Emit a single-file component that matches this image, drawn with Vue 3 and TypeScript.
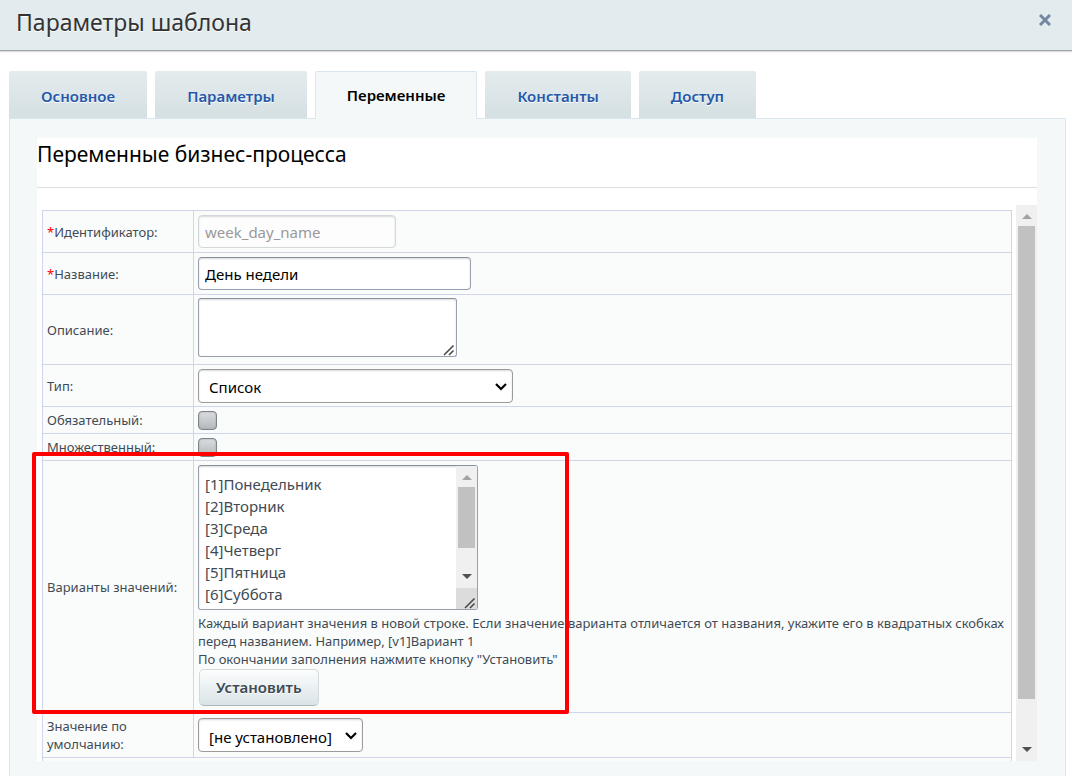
<script setup lang="ts">
import { ref } from 'vue'

interface Tab {
  id: string
  label: string
}

const tabs: Tab[] = [
  { id: 'main', label: 'Основное' },
  { id: 'params', label: 'Параметры' },
  { id: 'vars', label: 'Переменные' },
  { id: 'consts', label: 'Константы' },
  { id: 'access', label: 'Доступ' },
]

const activeTab = ref('vars')
const identifier = ref('week_day_name')
const title = ref('День недели')
const description = ref('')
const required = ref(false)
const multiple = ref(false)
const options = ref(
  [
    '[1]Понедельник',
    '[2]Вторник',
    '[3]Среда',
    '[4]Четверг',
    '[5]Пятница',
    '[6]Суббота',
    '[7]Воскресенье',
  ].join('\n'),
)
</script>

<template>
  <div class="dialog">
    <header class="dialog-head">
      <h1>Параметры шаблона</h1>
      <button class="close" type="button" aria-label="Закрыть">
        <svg width="12" height="12" viewBox="0 0 12 12">
          <path d="M1 1 L11 11 M11 1 L1 11" />
        </svg>
      </button>
    </header>

    <main class="body">
      <nav class="tabs" role="tablist">
        <button
          v-for="tab in tabs"
          :key="tab.id"
          type="button"
          role="tab"
          class="tab"
          :class="{ active: tab.id === activeTab }"
          :aria-selected="tab.id === activeTab"
          @click="activeTab = tab.id"
        >
          {{ tab.label }}
        </button>
      </nav>

      <section class="panel">
        <div class="sheet">
          <h2>Переменные бизнес-процесса</h2>

          <div class="scroller">
            <table class="form">
              <colgroup>
                <col class="col-label" />
                <col />
              </colgroup>
              <tbody>
                <tr class="row-input">
                  <th scope="row"><label for="f-id"><span class="star">*</span>Идентификатор:</label></th>
                  <td><input id="f-id" v-model="identifier" class="field w-id" type="text" disabled /></td>
                </tr>
                <tr class="row-input">
                  <th scope="row"><label for="f-name"><span class="star">*</span>Название:</label></th>
                  <td><input id="f-name" v-model="title" class="field w-name" type="text" /></td>
                </tr>
                <tr class="row-desc">
                  <th scope="row"><label for="f-desc">Описание:</label></th>
                  <td>
                    <div class="area w-desc">
                      <textarea id="f-desc" v-model="description" class="field desc"></textarea>
                      <svg class="grip" width="12" height="12" viewBox="0 0 12 12">
                        <path d="M1 11 L10.5 1.5 M6 11 L10.5 6.5" />
                      </svg>
                    </div>
                  </td>
                </tr>
                <tr class="row-input">
                  <th scope="row"><label for="f-type">Тип:</label></th>
                  <td>
                    <div class="select w-type">
                      <select id="f-type" class="field">
                        <option>Список</option>
                      </select>
                      <svg class="chevron" width="12" height="8" viewBox="0 0 12 8"><path d="M1 1 L6 6 L11 1" /></svg>
                    </div>
                  </td>
                </tr>
                <tr class="row-check">
                  <th scope="row"><label for="f-req">Обязательный:</label></th>
                  <td><input id="f-req" v-model="required" class="check" type="checkbox" /></td>
                </tr>
                <tr class="row-check">
                  <th scope="row"><label for="f-mul">Множественный:</label></th>
                  <td><input id="f-mul" v-model="multiple" class="check" type="checkbox" /></td>
                </tr>
                <tr>
                  <th scope="row"><label for="f-opts">Варианты значений:</label></th>
                  <td class="cell-options">
                    <div class="area w-opts">
                      <textarea id="f-opts" v-model="options" class="field opts"></textarea>
                      <div class="scrollbar inner" aria-hidden="true">
                        <svg class="arrow dim" width="10" height="5" viewBox="0 0 10 5"><path d="M0 5 L5 0 L10 5 Z" /></svg>
                        <div class="track"><div class="thumb short"></div></div>
                        <svg class="arrow" width="10" height="5" viewBox="0 0 10 5"><path d="M0 0 L5 5 L10 0 Z" /></svg>
                        <div class="corner"></div>
                      </div>
                      <svg class="grip" width="12" height="12" viewBox="0 0 12 12">
                        <path d="M1 11 L10.5 1.5 M6 11 L10.5 6.5" />
                      </svg>
                    </div>
                    <p class="hint">
                      Каждый вариант значения в новой строке. Если значение варианта отличается от названия, укажите его в квадратных скобках перед названием. Например, [v1]Вариант 1<br />По окончании заполнения нажмите кнопку "Установить"
                    </p>
                    <button class="apply" type="button">Установить</button>
                    <div class="highlight" aria-hidden="true"></div>
                  </td>
                </tr>
                <tr class="row-default">
                  <th scope="row"><label for="f-def">Значение по умолчанию:</label></th>
                  <td>
                    <div class="select w-def">
                      <select id="f-def" class="field">
                        <option>[не установлено]</option>
                      </select>
                      <svg class="chevron" width="12" height="8" viewBox="0 0 12 8"><path d="M1 1 L6 6 L11 1" /></svg>
                    </div>
                  </td>
                </tr>
                <tr class="row-input">
                  <th colspan="2"></th>
                </tr>
              </tbody>
            </table>

            <div class="scrollbar" aria-hidden="true">
              <svg class="arrow dim" width="10" height="5" viewBox="0 0 10 5"><path d="M0 5 L5 0 L10 5 Z" /></svg>
              <div class="track"><div class="thumb long"></div></div>
              <svg class="arrow" width="10" height="5" viewBox="0 0 10 5"><path d="M0 0 L5 5 L10 0 Z" /></svg>
            </div>
          </div>
        </div>
      </section>
    </main>
  </div>
</template>

<style>
body {
  background: #fff;
}
</style>

<style scoped>
.dialog,
.dialog * {
  box-sizing: border-box;
}
.dialog {
  display: flex;
  flex-direction: column;
  height: 100vh;
  overflow: hidden;
  font-family: 'Noto Sans', 'Open Sans', sans-serif;
  font-size: 13px;
  line-height: 18px;
  color: #3f4b54;
}
.dialog-head {
  flex: none;
  display: flex;
  align-items: center;
  justify-content: space-between;
  height: 51px;
  padding: 0 21px 6px 16px;
  background: #e2ebee;
  border-bottom: 1px solid #a0a5a7;
  box-shadow: 0 1px 1px #dcdcdc;
}
h1 {
  margin: 0;
  font-size: 23px;
  line-height: 32px;
  font-weight: 400;
  color: #333;
  text-shadow: 0 1px 0 #fff;
}
.close {
  display: flex;
  padding: 0;
  margin-top: -4px;
  border: 0;
  background: none;
}
.close path {
  fill: none;
  stroke: #7488a1;
  stroke-width: 3;
}
.body {
  flex: 1;
  display: flex;
  flex-direction: column;
  min-height: 0;
  padding: 20px 6px 0 9px;
}
.tabs {
  display: flex;
  gap: 8px;
  position: relative;
}
.tab {
  height: 47px;
  padding: 2px 32px 0;
  border: 0;
  border-radius: 2px 2px 0 0;
  background: linear-gradient(#e4ebed, #d5e0e3);
  font-family: 'Noto Sans', 'Open Sans', sans-serif;
  font-size: 15px;
  font-weight: 600;
  color: #2458a8;
  text-shadow: 0 1px 0 #fff;
}
.tab.active {
  height: 48px;
  margin: 0 0 -1px;
  padding: 0 31px 1px;
  border: 1px solid #d9e6ed;
  border-bottom: 0;
  background: #f4f8f9;
  color: #000;
  text-shadow: none;
}
.panel {
  flex: 1;
  display: flex;
  min-height: 0;
  padding: 19px 28px 15px 27px;
  border: 1px solid #d9e6ed;
  border-bottom: 0;
  background: #f4f8f9;
}
.sheet {
  flex: 1;
  display: flex;
  flex-direction: column;
  min-width: 0;
  background: #fff;
}
h2 {
  margin: 0 0 17px;
  height: 50px;
  border-bottom: 1px solid #dcdfe2;
  font-size: 21px;
  line-height: 32px;
  font-weight: 400;
  color: #000;
}
.scroller {
  flex: 1;
  display: flex;
  align-items: flex-start;
  gap: 4px;
  min-height: 0;
  padding-left: 5px;
  overflow-x: visible;
  overflow-y: clip;
}
.form {
  flex: 1;
  margin-top: 5px;
  border-collapse: collapse;
  table-layout: fixed;
  background: #fafcfc;
}
.col-label {
  width: 151px;
}
.form th,
.form td {
  padding: 3px 4px;
  border: 1px solid #cfd5ea;
  text-align: left;
  vertical-align: middle;
}
.form th {
  font-weight: 400;
}
.form th label {
  display: block;
}
.star {
  color: #f00;
}
.row-input {
  height: 42px;
}
.row-desc {
  height: 70px;
}
.form .row-desc td {
  vertical-align: top;
}
.row-check {
  height: 27px;
}
.row-default {
  height: 45px;
}
.field {
  display: block;
  width: 100%;
  height: 34px;
  margin: 0;
  padding: 0 7px 0 6px;
  border: 1px solid #9a9fb0;
  border-top-color: #87919c;
  border-radius: 4px;
  outline: 0;
  background: #fff;
  box-shadow: inset 0 1px 2px #d5dadd;
  font-family: 'Noto Sans', 'Open Sans', sans-serif;
  font-size: 15px;
  line-height: 22px;
  color: #000;
}
input.field {
  height: 33px;
}
.field:disabled {
  border-color: #d3d7da;
  background: #fdfdfd;
  color: #999;
}
.w-id {
  width: 198px;
}
.w-name {
  width: 273px;
}
.w-desc {
  width: 259px;
}
.w-type {
  width: 315px;
}
.w-opts {
  width: 280px;
}
.w-def {
  width: 165px;
}
.area,
.select {
  position: relative;
}
textarea.field {
  resize: none;
  overflow: hidden;
}
.field.desc {
  height: 59px;
  border-radius: 3px;
}
.field.opts {
  height: 145px;
  padding: 7px 28px 0 6px;
  border-radius: 3px;
  color: #3f4b54;
}
select.field {
  appearance: none;
  padding: 3px 24px 0 10px;
  border-color: #9b9b9b;
}
.chevron {
  position: absolute;
  right: 6px;
  top: 14px;
  pointer-events: none;
}
.chevron path {
  fill: none;
  stroke: #000;
  stroke-width: 2.2;
}
.grip {
  position: absolute;
  right: 2px;
  bottom: 1px;
}
.grip path {
  fill: none;
  stroke: #444;
  stroke-width: 1.5;
}
.check {
  appearance: none;
  display: block;
  width: 19px;
  height: 19px;
  margin: 0;
  border: 1px solid #7d8386;
  border-radius: 4px;
  background: linear-gradient(#dadddf, #b4b9bb);
  box-shadow: inset 0 0 2px #999fa2;
}
.form .cell-options {
  position: relative;
  padding: 4px 4px 6px;
}
.hint {
  margin: 4px 0 0;
}
.apply {
  display: block;
  height: 37px;
  margin: 1px 0 0 1px;
  padding: 0 16px 2px;
  border: 1px solid #d3dade;
  border-bottom-color: #aab4ba;
  border-radius: 5px;
  background: linear-gradient(#fcfdfd, #d9e4e8);
  font-family: 'Noto Sans', 'Open Sans', sans-serif;
  font-size: 15px;
  font-weight: 600;
  color: #3f4b54;
  text-shadow: 0 1px 0 #fff;
}
.highlight {
  position: absolute;
  z-index: 5;
  left: -162px;
  top: -9px;
  bottom: -2px;
  width: 537px;
  border: 4px solid #f00;
  border-radius: 2px;
  pointer-events: none;
}
.scrollbar {
  flex: none;
  align-self: stretch;
  display: flex;
  flex-direction: column;
  align-items: center;
  width: 21px;
  padding: 9px 0;
  background: #f0f0f0;
}
.arrow {
  flex: none;
  fill: #505050;
}
.arrow.dim {
  fill: #a3a3a3;
}
.track {
  flex: 1;
  min-height: 0;
  width: 17px;
  padding: 7px 0;
}
.thumb {
  background: #c1c1c1;
}
.thumb.long {
  height: 92%;
}
.thumb.short {
  height: 76%;
}
.scrollbar.inner {
  position: absolute;
  top: 1px;
  right: 1px;
  bottom: 1px;
  padding-bottom: 0;
}
.corner {
  flex: none;
  width: 100%;
  height: 21px;
  margin-top: 9px;
  background: #dcdcdc;
}
</style>
